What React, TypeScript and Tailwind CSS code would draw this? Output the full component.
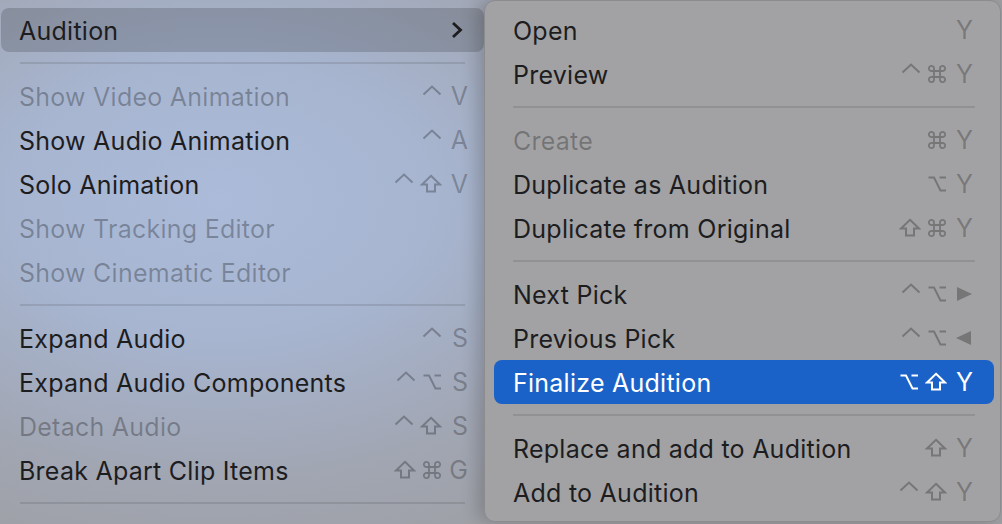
import React from "react";

type Sym = "ctrl" | "opt" | "shift" | "cmd" | "right" | "left" | string;

const Glyph = ({ s }: { s: Sym }) => {
  const common = {
    width: 20,
    height: 20,
    viewBox: "0 0 20 20",
    fill: "none",
    stroke: "currentColor",
    strokeWidth: 2,
    strokeLinejoin: "miter" as const,
  };
  if (s === "ctrl")
    return (
      <svg {...common} className="shrink-0 -translate-y-[3px]">
        <polyline points="1.5,11.5 10,3.5 18.5,11.5" />
      </svg>
    );
  if (s === "opt")
    return (
      <svg {...common} className="shrink-0">
        <path d="M1.5 3.5 H7 L13.5 16.5 H19" />
        <path d="M12.5 3.5 H19" />
      </svg>
    );
  if (s === "shift")
    return (
      <svg {...common} width={22} height={20} viewBox="0 0 22 20" className="shrink-0">
        <polygon points="11,1.8 20,10.5 15,10.5 15,17.5 7,17.5 7,10.5 2,10.5" />
      </svg>
    );
  if (s === "cmd")
    return (
      <svg {...common} strokeWidth={1.8} className="shrink-0">
        <path d="M7 7 V5 A2.6 2.6 0 1 0 5 7 H15 A2.6 2.6 0 1 0 13 5 V15 A2.6 2.6 0 1 0 15 13 H5 A2.6 2.6 0 1 0 7 15 Z" />
      </svg>
    );
  if (s === "right")
    return (
      <svg width={18} height={20} viewBox="0 0 18 20" className="shrink-0">
        <polygon points="2,3 17,10 2,17" fill="currentColor" />
      </svg>
    );
  if (s === "left")
    return (
      <svg width={18} height={20} viewBox="0 0 18 20" className="shrink-0">
        <polygon points="16,3 1,10 16,17" fill="currentColor" />
      </svg>
    );
  return <span className="text-[25px] leading-none">{s}</span>;
};

const Shortcut = ({ keys }: { keys: Sym[] }) => {
  const mods = keys.slice(0, -1);
  const key = keys[keys.length - 1];
  return (
    <div className="flex items-center">
      <div className="flex items-center gap-[6px]">
        {mods.map((m, i) => (
          <Glyph key={i} s={m} />
        ))}
      </div>
      <div className="w-[26px] flex justify-end items-center">
        <Glyph s={key} />
      </div>
    </div>
  );
};

type Item = {
  label: string;
  keys?: Sym[];
  disabled?: boolean;
  selected?: boolean;
  submenu?: boolean;
  hover?: boolean;
};

const Row = ({ item, side }: { item: Item; side: "left" | "right" }) => {
  const base =
    side === "left"
      ? "h-[44px] flex items-center justify-between pl-[18px] pr-[16px] rounded-[8px]"
      : "h-[44px] flex items-center justify-between pl-[19px] pr-[21px] rounded-[8px]";
  const bg = item.selected
    ? "bg-[#1a62c8] text-white"
    : item.hover
    ? "bg-black/[0.16] text-[#1d1d1f]"
    : item.disabled
    ? "text-black/[0.28]"
    : "text-[#1d1d1f]";
  const sc = item.selected ? "text-white" : "text-black/[0.27]";
  return (
    <div className={`${base} ${bg}`}>
      <span className="text-[25px] leading-none tracking-[0.25px] translate-y-[1px]">{item.label}</span>
      {item.keys && (
        <div className={sc}>
          <Shortcut keys={item.keys} />
        </div>
      )}
      {item.submenu && (
        <svg width="14" height="20" viewBox="0 0 14 20" className="mr-[4px] text-[#1d1d1f]">
          <polyline points="3,3 10.5,10 3,17" fill="none" stroke="currentColor" strokeWidth="2.8" />
        </svg>
      )}
    </div>
  );
};

const Sep = () => (
  <div className="h-[22px] flex items-center px-[19px]">
    <div className="h-[2px] w-full bg-black/[0.1]" />
  </div>
);

export default function App() {
  const left: (Item | "sep")[] = [
    { label: "Audition", submenu: true, hover: true },
    "sep",
    { label: "Show Video Animation", keys: ["ctrl", "V"], disabled: true },
    { label: "Show Audio Animation", keys: ["ctrl", "A"] },
    { label: "Solo Animation", keys: ["ctrl", "shift", "V"] },
    { label: "Show Tracking Editor", disabled: true },
    { label: "Show Cinematic Editor", disabled: true },
    "sep",
    { label: "Expand Audio", keys: ["ctrl", "S"] },
    { label: "Expand Audio Components", keys: ["ctrl", "opt", "S"] },
    { label: "Detach Audio", keys: ["ctrl", "shift", "S"], disabled: true },
    { label: "Break Apart Clip Items", keys: ["shift", "cmd", "G"] },
    "sep",
  ];
  const right: (Item | "sep")[] = [
    { label: "Open", keys: ["Y"] },
    { label: "Preview", keys: ["ctrl", "cmd", "Y"] },
    "sep",
    { label: "Create", keys: ["cmd", "Y"], disabled: true },
    { label: "Duplicate as Audition", keys: ["opt", "Y"] },
    { label: "Duplicate from Original", keys: ["shift", "cmd", "Y"] },
    "sep",
    { label: "Next Pick", keys: ["ctrl", "opt", "right"] },
    { label: "Previous Pick", keys: ["ctrl", "opt", "left"] },
    { label: "Finalize Audition", keys: ["opt", "shift", "Y"], selected: true },
    "sep",
    { label: "Replace and add to Audition", keys: ["shift", "Y"] },
    { label: "Add to Audition", keys: ["ctrl", "shift", "Y"] },
  ];

  return (
    <div
      className="w-[1002px] h-[524px] overflow-hidden flex bg-[radial-gradient(ellipse_60%_75%_at_22%_38%,#abbbd9_0%,#a7b5d0_35%,#a1a6b3_70%,#9e9fa3_100%)]"
      style={{ fontFamily: "Inter, 'Noto Sans', 'DejaVu Sans', sans-serif" }}
    >
      <div className="w-[484px] shrink-0 pt-[8px] pl-[1px]">
        {left.map((it, i) =>
          it === "sep" ? <Sep key={i} /> : <Row key={i} item={it} side="left" />
        )}
      </div>
      <div className="w-[517px] h-[522px] shrink-0 rounded-[11px] bg-[#a2a2a4] border border-[#8c8c8f] shadow-[-6px_0_18px_rgba(0,0,0,0.2)] pt-[7px] pl-[9px] pr-[6px]">
        {right.map((it, i) =>
          it === "sep" ? <Sep key={i} /> : <Row key={i} item={it} side="right" />
        )}
      </div>
    </div>
  );
}
